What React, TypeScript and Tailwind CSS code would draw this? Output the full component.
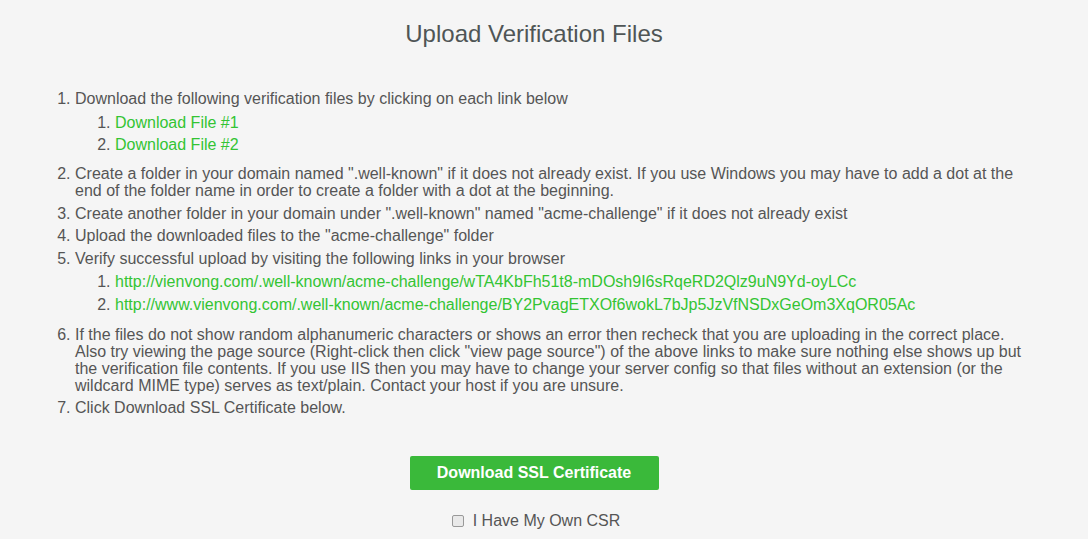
import React from "react";

const verifyLinks = [
  "http://vienvong.com/.well-known/acme-challenge/wTA4KbFh51t8-mDOsh9I6sRqeRD2Qlz9uN9Yd-oyLCc",
  "http://www.vienvong.com/.well-known/acme-challenge/BY2PvagETXOf6wokL7bJp5JzVfNSDxGeOm3XqOR05Ac",
];

function SubList({ items, last }: { items: string[]; last?: string }) {
  return (
    <ol className={`mt-[6px] list-decimal pl-10 ${last ?? "mb-[11px]"}`}>
      {items.map((t) => (
        <li key={t} className="mb-[5px]">
          <a href="#" className="text-[#33c433]">
            {t}
          </a>
        </li>
      ))}
    </ol>
  );
}

export default function App() {
  return (
    <div
      className="min-h-screen bg-[#f5f5f5] text-[#555]"
      style={{ fontFamily: '"Liberation Sans", Arial, sans-serif' }}
    >
      <div className="mx-[15px] w-[1038px] px-5 pt-[19px]">
        <h1 className="text-center text-[24px] leading-[30px] text-[#4f5556]">
          Upload Verification Files
        </h1>

        <ol className="mt-[41px] list-decimal pl-10 text-base leading-[17.5px]">
          <li className="mb-[5px]">
            Download the following verification files by clicking on each link below
            <SubList items={["Download File #1", "Download File #2"]} />
          </li>
          <li className="mb-[5px]">
            Create a folder in your domain named ".well-known" if it does not already exist. If you use
            Windows you may have to add a dot at the end of the folder name in order to create a folder with
            a dot at the beginning.
          </li>
          <li className="mb-[5px]">
            Create another folder in your domain under ".well-known" named "acme-challenge" if it does not
            already exist
          </li>
          <li className="mb-[5px]">Upload the downloaded files to the "acme-challenge" folder</li>
          <li className="mb-[5px]">
            Verify successful upload by visiting the following links in your browser
            <SubList items={verifyLinks} last="mb-[13px]" />
          </li>
          <li className="mb-[5px] leading-[17px]">
            If the files do not show random alphanumeric characters or shows an error then recheck that you
            are uploading in the correct place. Also try viewing the page source (Right-click then click "view
            page source") of the above links to make sure nothing else shows up but the verification file
            contents. If you use IIS then you may have to change your server config so that files without an
            extension (or the wildcard MIME type) serves as text/plain. Contact your host if you are unsure.
          </li>
          <li className="mb-[5px]">Click Download SSL Certificate below.</li>
        </ol>

        <div className="mt-[39px] flex justify-center">
          <button
            type="button"
            className="h-[34px] w-[249px] rounded-[2px] bg-[#3ab93a] text-base font-bold text-white"
          >
            Download SSL Certificate
          </button>
        </div>

        <label className="mt-[19px] flex items-center justify-center gap-[9px] pl-[4px] text-base">
          <span className="h-[12px] w-[12px] rounded-[2px] border border-[#999] bg-[#e9e9e9]" />
          <span>I Have My Own CSR</span>
        </label>
      </div>
    </div>
  );
}
